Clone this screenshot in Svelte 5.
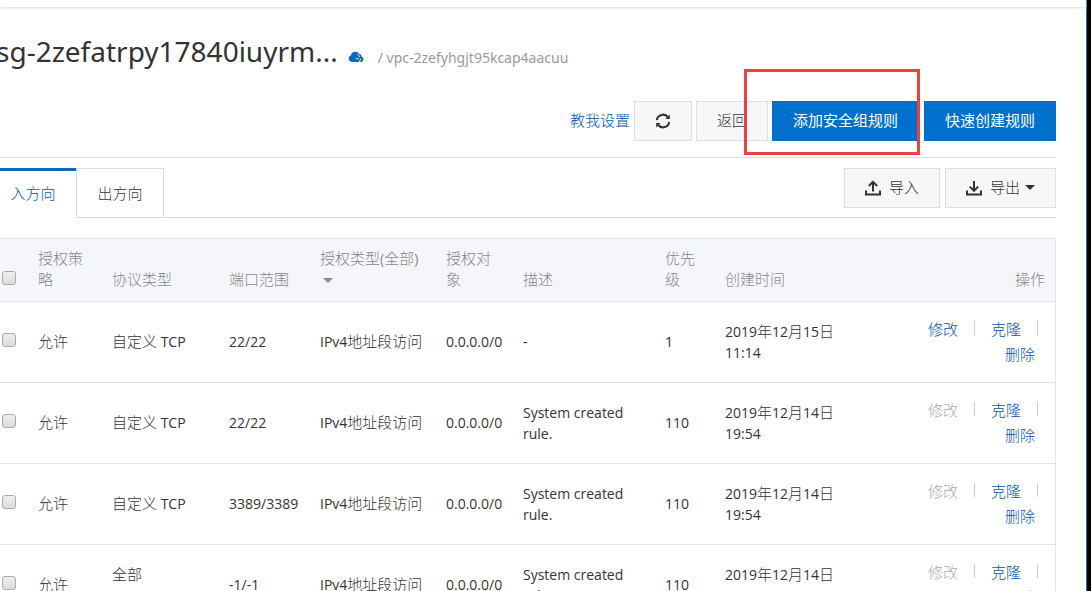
<script>
  const columns = [
    { label: '授权策略', cls: 'policy' },
    { label: '协议类型', cls: 'protocol' },
    { label: '端口范围', cls: 'port' },
    { label: '授权类型(全部)', cls: 'kind', menu: true },
    { label: '授权对象', cls: 'target' },
    { label: '描述', cls: 'desc' },
    { label: '优先级', cls: 'priority' },
    { label: '创建时间', cls: 'created' },
    { label: '操作', cls: 'actions' },
  ];

  const system = 'System created rule.';
  const rules = [
    { cells: ['允许', '自定义 TCP', '22/22', 'IPv4地址段访问', '0.0.0.0/0', '-', '1', '2019年12月15日 11:14'], editable: true },
    { cells: ['允许', '自定义 TCP', '22/22', 'IPv4地址段访问', '0.0.0.0/0', system, '110', '2019年12月14日 19:54'], editable: false },
    { cells: ['允许', '自定义 TCP', '3389/3389', 'IPv4地址段访问', '0.0.0.0/0', system, '110', '2019年12月14日 19:54'], editable: false },
    { cells: ['允许', '全部 ICMP(IPv4)', '-1/-1', 'IPv4地址段访问', '0.0.0.0/0', system, '110', '2019年12月14日 19:54'], editable: false },
  ];

  // Latin runs are set one size smaller than the Chinese text around them.
  const runs = (text) =>
    (text.match(/[\u0020-\u007e]+|[^\u0020-\u007e]+/g) ?? []).map((t) => ({ t, latin: t.charCodeAt(0) < 127 }));
</script>

{#snippet mixed(text)}{#each runs(text) as run}{#if run.latin}<span class="latin">{run.t}</span>{:else}{run.t}{/if}{/each}{/snippet}

<div class="page">
  <div class="topbar"></div>
  <main>
    <header class="title">
      <h1>sg-2zefatrpy17840iuyrm...</h1>
      <svg class="cloud" viewBox="0 0 16 12" aria-hidden="true">
        <path d="M3.6 11A3.3 3.3 0 0 1 2.8 4.6 4.6 4.6 0 0 1 11.2 2.8 3 3 0 0 1 13.6 5.4 2.9 2.9 0 0 1 13 11Z" fill="#0a69c7" />
        <path d="M9.6 3.4Q11.4 4 11.2 6M7.8 7.2Q9.2 8.6 10.8 7.4M11.2 11.4 12.8 7.6" fill="none" stroke="#fff" stroke-width="1" />
      </svg>
      <span class="vpc">/ vpc-2zefyhgjt95kcap4aacuu</span>
    </header>

    <div class="toolbar">
      <a href="#guide">教我设置</a>
      <button class="btn refresh" aria-label="刷新">
        <svg viewBox="0 0 16 16" width="16" height="16" aria-hidden="true">
          <g fill="none" stroke="#333" stroke-width="2">
            <path d="M1.8 7.2A6.2 6.2 0 0 1 12.8 4" />
            <path d="M14.2 8.8A6.2 6.2 0 0 1 3.2 12" />
          </g>
          <path d="M14.8 1.6V6H10.4ZM1.2 14.4V10H5.6Z" fill="#333" />
        </svg>
      </button>
      <button class="btn">返回</button>
      <div class="marked">
        <button class="btn primary">添加安全组规则</button>
        <span class="marker"></span>
      </div>
      <button class="btn primary">快速创建规则</button>
    </div>

    <div class="tabs">
      <button class="tab active">入方向</button>
      <button class="tab">出方向</button>
      <div class="transfer">
        <button class="btn">
          <svg viewBox="0 0 16 16" width="16" height="16" fill="none" stroke="#333" stroke-width="2" aria-hidden="true">
            <path d="M1 10.5V14.5H15V10.5M8 11.5V2M3.8 6 8 1.8 12.2 6" />
          </svg>
          导入
        </button>
        <button class="btn export">
          <svg viewBox="0 0 16 16" width="16" height="16" fill="none" stroke="#333" stroke-width="2" aria-hidden="true">
            <path d="M1 10.5V14.5H15V10.5M8 1V10.6M3.8 6.6 8 10.8 12.2 6.6" />
          </svg>
          导出<i class="caret"></i>
        </button>
      </div>
    </div>

    <table>
      <colgroup>
        <col class="pick" />
        {#each columns as column}<col class={column.cls} />{/each}
      </colgroup>
      <thead>
        <tr>
          <th class="check"><input type="checkbox" aria-label="全选" /></th>
          {#each columns as column}
            <th class={column.cls}>{@render mixed(column.label)}{#if column.menu}<br /><i class="caret"></i>{/if}</th>
          {/each}
        </tr>
      </thead>
      <tbody>
        {#each rules as rule}
          <tr>
            <td class="check"><input type="checkbox" aria-label="选择规则" /></td>
            {#each rule.cells as cell}
              <td>{@render mixed(cell)}</td>
            {/each}
            <td class="actions">
              <div class="links">
                {#if rule.editable}<a href="#edit">修改</a>{:else}<span class="off">修改</span>{/if}
                <i class="bar"></i>
                <a href="#clone">克隆</a>
                <i class="bar"></i>
              </div>
              <div class="links last"><a href="#delete">删除</a></div>
            </td>
          </tr>
        {/each}
      </tbody>
    </table>
  </main>
</div>

<style>
  :global(body) {
    background: #fff;
  }
  .page {
    box-sizing: border-box;
    height: 100vh;
    overflow: hidden;
    border-right: 4px solid #000;
    box-shadow: inset -1px 0 #1f6fb8;
    color: #333;
    font: 300 15px/21px 'Noto Sans CJK SC', 'Noto Sans', sans-serif;
  }
  .topbar {
    height: 7px;
    margin-right: 1px;
    box-shadow: 0 1px 3px #ddd;
  }
  main {
    margin: 0 31px 0 -12px;
  }
  a {
    color: #0054b0;
    text-decoration: none;
  }
  button {
    font: inherit;
    color: inherit;
    cursor: pointer;
  }
  .latin {
    font-family: 'Open Sans', 'Noto Sans', sans-serif;
    font-weight: 400;
    font-size: 14px;
    line-height: 1;
  }

  .title {
    display: flex;
    align-items: center;
    height: 94px;
    padding-left: 8px;
    font-family: 'Noto Sans', sans-serif;
  }
  h1 {
    margin: 0 10px 0 0;
    font-size: 28px;
    line-height: 40px;
    font-weight: 400;
    padding-bottom: 6px;
  }
  .cloud {
    width: 16px;
    height: 12px;
    margin: 6px 14px 0 0;
  }
  .vpc {
    color: #999;
    font-size: 14px;
    font-weight: 400;
    padding-top: 6px;
  }

  .toolbar {
    display: flex;
    align-items: center;
    justify-content: flex-end;
    gap: 4px;
    padding-bottom: 16px;
    border-bottom: 1px solid #ddd;
  }
  .toolbar > a {
    padding-bottom: 4px;
  }
  .btn {
    display: flex;
    align-items: center;
    box-sizing: border-box;
    height: 40px;
    padding: 0 20px 3px;
    border: 1px solid #ddd;
    background: #f7f7f7;
  }
  .btn svg {
    margin-top: 3px;
  }
  .btn.primary {
    border-color: #0070cc;
    background: #0070cc;
    color: #fff;
    font-weight: 400;
  }
  .marked {
    position: relative;
    margin-right: 1px;
  }
  .marker {
    position: absolute;
    inset: -32px -1px -14px -28px;
    border: 3px solid #ee4040;
    pointer-events: none;
  }

  .tabs {
    display: flex;
    margin-top: 10px;
    height: 50px;
    background: linear-gradient(#ddd, #ddd) bottom / 100% 1px no-repeat;
  }
  .tab {
    width: 88px;
    padding: 0 0 2px;
    border: 1px solid #ddd;
    background: #fff;
  }
  .tab.active {
    border-width: 3px 0 0;
    border-color: #0e69b5;
    color: #0054b0;
    padding: 0 0 4px 2px;
  }
  .transfer {
    display: flex;
    gap: 5px;
    margin-left: auto;
  }
  .transfer svg {
    margin-right: 8px;
  }
  .caret {
    display: inline-block;
    border: 5px solid transparent;
    border-top-color: currentColor;
    border-bottom: 0;
    margin: 2px 0 0 5px;
  }

  table {
    width: 100%;
    margin-top: 20px;
    table-layout: fixed;
    border-collapse: separate;
    border-spacing: 0;
    border: 1px solid #e1e3e7;
    border-bottom: 0;
  }
  th,
  td {
    box-sizing: border-box;
    padding: 0 10px;
    border-bottom: 1px solid #e1e3e7;
    text-align: left;
    font-weight: 300;
  }
  th {
    height: 63px;
    padding: 8px 10px 12px;
    background: #f4f6fa;
    color: #888;
    vertical-align: bottom;
  }
  th.kind {
    padding-right: 0;
  }
  th .caret {
    margin: 0 0 0 3px;
    vertical-align: middle;
  }
  td {
    height: 81px;
    padding-bottom: 3px;
    vertical-align: middle;
  }
  .pick { width: 39px; }
  col.policy { width: 74px; }
  col.protocol { width: 117px; }
  col.port { width: 91px; }
  col.kind { width: 126px; }
  col.target { width: 77px; }
  col.priority { width: 60px; }
  col.created { width: 145px; }
  col.actions { width: 195px; }
  .check {
    padding-left: 13px;
    padding-bottom: 5px;
    vertical-align: middle;
  }
  input {
    display: block;
    appearance: none;
    width: 14px;
    height: 14px;
    margin: 0;
    border: 1px solid #aaa;
    border-radius: 3px;
    background: linear-gradient(#eee, #dcdcdc);
  }
  th input {
    margin-top: 12px;
  }
  .actions {
    text-align: right;
  }
  .links {
    display: flex;
    align-items: center;
    justify-content: flex-end;
    gap: 16px;
    line-height: 25px;
    padding-right: 7px;
  }
  .links.last {
    padding-right: 10px;
  }
  .off {
    color: #aaa;
  }
  .bar {
    width: 1px;
    height: 14px;
    background: #ccc;
  }
</style>
